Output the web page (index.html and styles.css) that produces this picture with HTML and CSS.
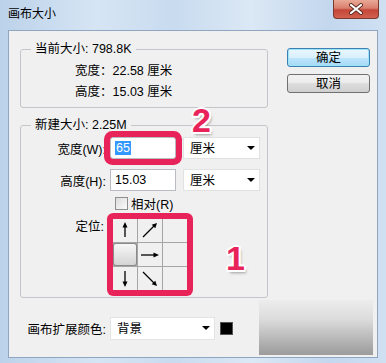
FILE: index.html
```html
<!DOCTYPE html>
<html lang="zh-CN">
<head>
    <meta charset="UTF-8">
    <title>画布大小</title>
    <link rel="stylesheet" href="styles.css">
</head>
<body>
    <div class="window">
        <div class="titlebar">
            <span class="title">画布大小</span>
            <div class="close">
                <svg width="16" height="12" viewBox="0 0 16 12">
                    <path d="M3 2 L13 10 M13 2 L3 10" stroke="#5a2a22" stroke-width="4" stroke-linecap="round"/>
                    <path d="M3 2 L13 10 M13 2 L3 10" stroke="#fff" stroke-width="2.2" stroke-linecap="round"/>
                </svg>
            </div>
        </div>

        <div class="client">
            <div class="main">
                <fieldset class="group current">
                    <legend>当前大小: 798.8K</legend>
                    <div class="info-row">宽度：22.58 厘米</div>
                    <div class="info-row">高度：15.03 厘米</div>
                </fieldset>

                <fieldset class="group new">
                    <legend>新建大小: 2.25M</legend>
                    <div class="field-row">
                        <label class="field-label">宽度(W):</label>
                        <div class="input marked"><span class="selected-text">65</span></div>
                        <div class="select">厘米<span class="caret"></span></div>
                    </div>
                    <div class="field-row">
                        <label class="field-label">高度(H):</label>
                        <div class="input">15.03</div>
                        <div class="select">厘米<span class="caret"></span></div>
                    </div>
                    <div class="check-row">
                        <span class="checkbox"></span>相对(R)
                    </div>
                    <div class="anchor-row">
                        <label class="anchor-label">定位:</label>
                        <div class="anchor-grid marked">
                            <div class="cell">
                                <svg width="24" height="23"><line x1="12" y1="18" x2="12" y2="6" stroke="#000" stroke-width="1.3"/><polygon points="12,3 9.5,8.5 14.5,8.5" fill="#000"/></svg>
                            </div>
                            <div class="cell">
                                <svg width="24" height="23"><line x1="5" y1="18" x2="16" y2="7" stroke="#000" stroke-width="1.3"/><polygon points="19,4 17.3,9.3 13.7,5.7" fill="#000"/></svg>
                            </div>
                            <div class="cell"></div>
                            <div class="cell active"></div>
                            <div class="cell">
                                <svg width="24" height="23"><line x1="3" y1="12" x2="17" y2="12" stroke="#000" stroke-width="1.3"/><polygon points="21,12 15.5,9.5 15.5,14.5" fill="#000"/></svg>
                            </div>
                            <div class="cell"></div>
                            <div class="cell">
                                <svg width="24" height="23"><line x1="12" y1="4" x2="12" y2="16" stroke="#000" stroke-width="1.3"/><polygon points="12,20 9.5,14.5 14.5,14.5" fill="#000"/></svg>
                            </div>
                            <div class="cell">
                                <svg width="24" height="23"><line x1="5" y1="5" x2="16" y2="16" stroke="#000" stroke-width="1.3"/><polygon points="19,19 17.3,13.7 13.7,17.3" fill="#000"/></svg>
                            </div>
                            <div class="cell"></div>
                        </div>
                    </div>
                </fieldset>

                <div class="extend-row">
                    <label class="extend-label">画布扩展颜色:</label>
                    <div class="select wide">背景<span class="caret"></span></div>
                    <span class="swatch"></span>
                </div>
            </div>

            <div class="actions">
                <button class="btn default">确定</button>
                <button class="btn">取消</button>
            </div>
        </div>

        <!-- annotations on top of the dialog -->
        <span class="mark-num num-2">2</span>
        <span class="mark-num num-1">1</span>
        <div class="smudge"></div>
    </div>
</body>
</html>
```

FILE: styles.css
```css
* {
    box-sizing: border-box;
}
body {
    margin: 0;
    font-family: "Liberation Sans", "Noto Sans CJK SC", sans-serif;
    font-size: 12.5px;
    color: #000;
    background: #fff;
}
.window {
    position: relative;
    width: 386px;
    height: 363px;
    display: flex;
    flex-direction: column;
    overflow: hidden;
    background: linear-gradient(to right, #bcd2ea 0%, #d6e5f4 25%, #c8dbef 45%, #dbe8f5 65%, #c3d7ee 85%, #cfe0f2 100%);
}
.titlebar {
    height: 30px;
    flex: none;
    display: flex;
    align-items: flex-start;
    padding-left: 8px;
}
.title {
    font-size: 12px;
    line-height: 28px;
}
.close {
    margin-left: auto;
    margin-right: 7px;
    width: 46px;
    height: 19px;
    display: flex;
    align-items: center;
    justify-content: center;
    border: 1px solid #7a3a30;
    border-top: none;
    border-radius: 0 0 4px 4px;
    background: linear-gradient(to bottom, #e9a897 0%, #d9806e 45%, #c4473a 55%, #d2604f 100%);
}

/* client area */
.client {
    flex: 1;
    margin: 0 8px 5px 8px;
    border: 1px solid #8fa6c0;
    background: #f0f0f0;
    padding: 10px 7px 0 11px;
    display: flex;
}
.main {
    width: 248px;
}
.actions {
    width: 83px;
    margin-left: 19px;
    padding-top: 7px;
    display: flex;
    flex-direction: column;
    gap: 7px;
}

.group {
    margin: 0;
    padding: 0;
    min-width: 0;
    border: 1px solid #c2c6ca;
    border-radius: 3px;
}
.group legend {
    margin-left: 10px;
    padding: 0 4px;
    height: 16px;
    line-height: 16px;
}
.current {
    padding: 4px 0;
}
.info-row {
    height: 21px;
    line-height: 21px;
    padding-left: 54px;
}
.new {
    margin-top: 9px;
    padding: 4px 0 7px 0;
}

.field-row {
    display: flex;
    align-items: center;
    height: 22px;
    margin-bottom: 10px;
}
.field-label {
    width: 85px;
    text-align: right;
    margin-right: 4px;
}
.input {
    width: 66px;
    height: 22px;
    background: #fff;
    border: 1px solid #b9bcc1;
    padding-left: 4px;
    line-height: 20px;
}
.input.marked {
    border-radius: 3px;
    box-shadow: 0 0 0 6px #e8235a;
}
.selected-text {
    background: #3399ff;
    color: #fff;
    padding: 0 1px;
}
.select {
    position: relative;
    width: 77px;
    height: 22px;
    margin-left: 7px;
    background: #fff;
    border: 1px solid #e2e2e2;
    padding: 2px 0 0 6px;
    line-height: 18px;
}
.caret {
    position: absolute;
    right: 4px;
    top: 8px;
    border-left: 4px solid transparent;
    border-right: 4px solid transparent;
    border-top: 4px solid #000;
}

.check-row {
    display: flex;
    align-items: center;
    height: 15px;
    margin-top: -5px;
    padding-left: 94px;
}
.checkbox {
    width: 13px;
    height: 13px;
    margin-right: 3px;
    border: 1px solid #8e8f8f;
    background: linear-gradient(135deg, #dcdcdc, #fbfbfb);
}

.anchor-row {
    display: flex;
    margin-top: 8px;
}
.anchor-label {
    width: 83px;
    text-align: right;
    line-height: 16px;
}
.anchor-grid {
    margin-left: 9px;
    display: grid;
    grid-template-columns: repeat(3, 24px);
    grid-template-rows: repeat(3, 23px);
    gap: 1px;
    background: #a6a6a6;
    border-radius: 2px;
    box-shadow: 0 0 0 6px #e8235a;
}
.cell {
    background: #f0f0f0;
}
.cell svg {
    display: block;
}
.cell.active {
    border: 1px solid #8a8a8a;
    border-radius: 3px;
    background: linear-gradient(to bottom, #f7f7f7, #d4d4d4);
}

.extend-row {
    display: flex;
    align-items: center;
    height: 23px;
    margin-top: 19px;
}
.extend-label {
    width: 86px;
    text-align: right;
    margin-right: 4px;
}
.select.wide {
    width: 105px;
    height: 23px;
    margin-left: 0;
    padding-top: 1px;
    line-height: 20px;
    border-color: #e4e4e4;
}
.swatch {
    width: 13px;
    height: 13px;
    margin-left: 5px;
    background: #000;
    border: 1px solid #555;
}

.btn {
    width: 83px;
    height: 19px;
    padding: 0;
    font-family: inherit;
    font-size: 12.5px;
    line-height: 16px;
    color: #000;
    border: 1px solid #707070;
    border-radius: 3px;
    background: linear-gradient(to bottom, #f2f2f2 0%, #ebebeb 50%, #dddddd 50%, #cfcfcf 100%);
}
.btn.default {
    border-color: #3c7fb1;
    box-shadow: inset 0 0 0 1px #9de4f9;
    background: linear-gradient(to bottom, #eaf6fd 0%, #d9f0fc 50%, #bee6fd 50%, #a7d9f5 100%);
}

/* annotations */
.mark-num {
    position: absolute;
    font-family: "Liberation Sans", sans-serif;
    font-weight: bold;
    font-size: 34px;
    line-height: 26px;
    color: #e8235a;
    text-shadow: -2px 0 #fff, 2px 0 #fff, 0 -2px #fff, 0 2px #fff,
        -1.5px -1.5px #fff, 1.5px 1.5px #fff, -1.5px 1.5px #fff, 1.5px -1.5px #fff,
        2px 3px 3px rgba(0, 0, 0, 0.35);
}
.num-2 {
    left: 192px;
    top: 107px;
}
.num-1 {
    left: 226px;
    top: 245px;
}
.smudge {
    position: absolute;
    left: 259px;
    top: 300px;
    width: 114px;
    height: 55px;
    background: linear-gradient(to bottom, #ececec 0%, #dcdcdc 35%, #a9a9a9 85%, #9c9c9c 100%);
}
```
